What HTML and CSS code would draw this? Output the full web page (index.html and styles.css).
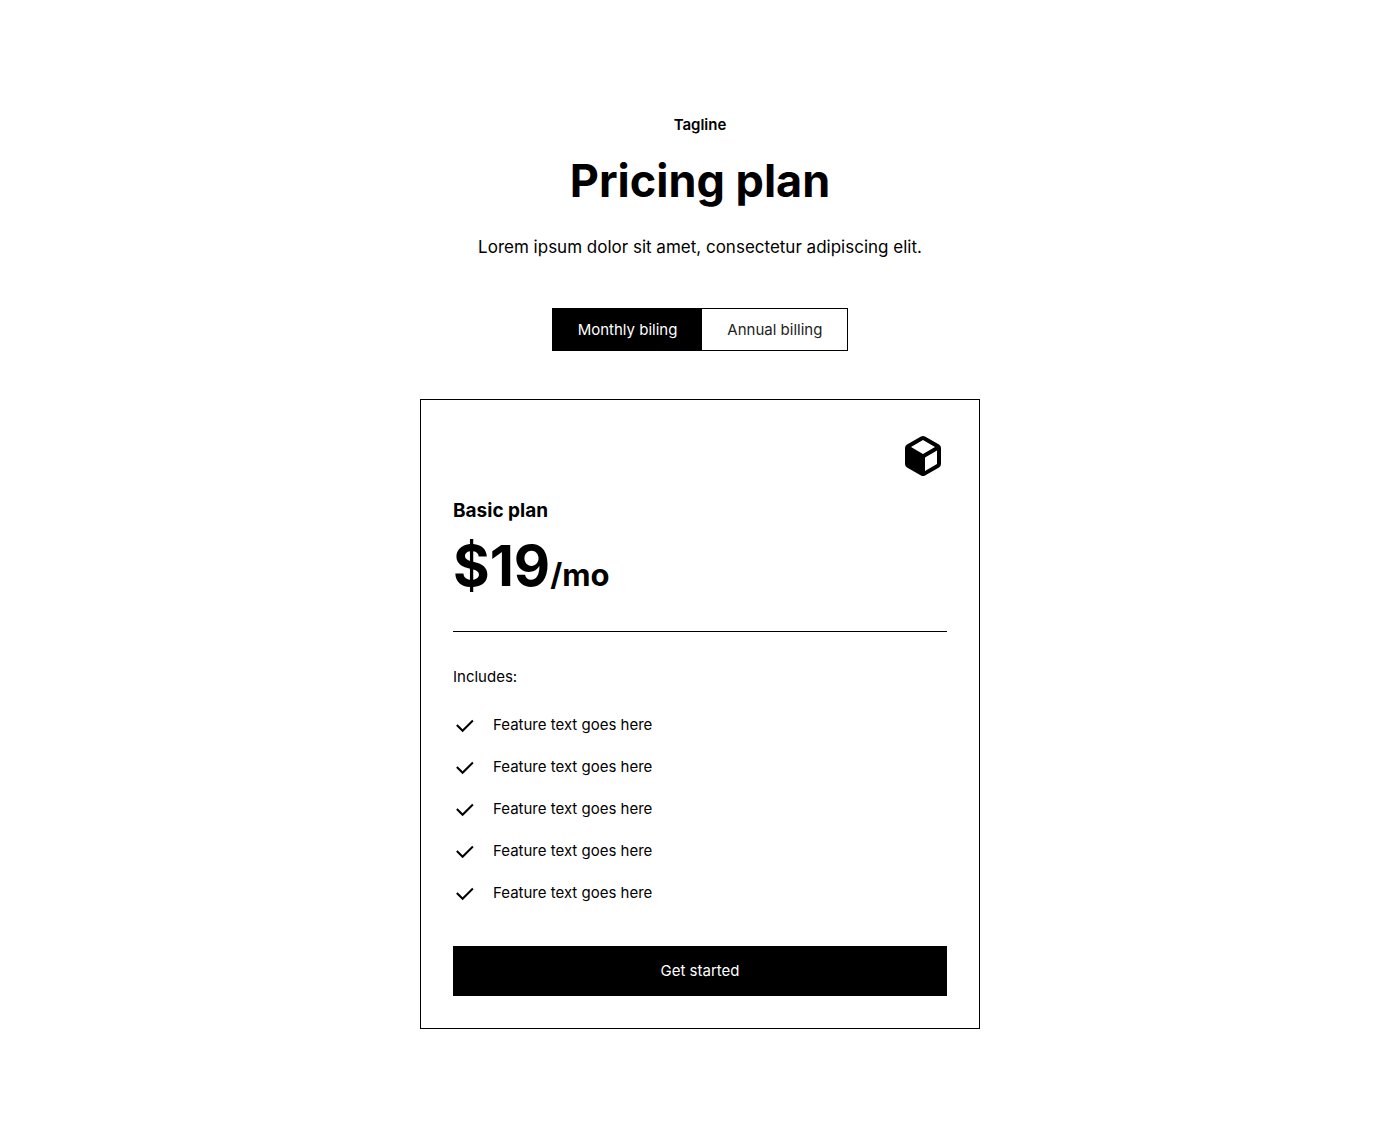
FILE: index.html
```html
<!DOCTYPE html>
<html lang="en">
<head>
  <meta charset="utf-8">
  <meta name="viewport" content="width=device-width, initial-scale=1">
  <title>Pricing plan</title>
  <link rel="stylesheet" href="styles.css">
</head>
<body>
  <svg class="sprite" aria-hidden="true">
    <symbol id="check" viewBox="0 0 24 24"><path fill="currentColor" d="m9.6 15.172 9.592-9.393 1.415 1.414L9.6 18.2l-6.464-6.464 1.414-1.414z"/></symbol>
  </svg>
  <main class="pricing">
    <header class="intro">
      <p class="tagline">Tagline</p>
      <h1 class="title">Pricing plan</h1>
      <p class="lead">Lorem ipsum dolor sit amet, consectetur adipiscing elit.</p>
    </header>
    <div class="billing" role="group" aria-label="Billing period">
      <button class="billing-option billing-option-active" type="button" aria-pressed="true">Monthly biling</button>
      <button class="billing-option" type="button" aria-pressed="false">Annual billing</button>
    </div>
    <section class="card">
      <svg class="card-icon" viewBox="0 0 24 24" aria-hidden="true"><path fill="currentColor" fill-rule="evenodd" d="M11 2.27a2 2 0 0 1 2 0l7 4a2 2 0 0 1 1 1.73v8a2 2 0 0 1-1 1.73l-7 4a2 2 0 0 1-2 0l-7-4A2 2 0 0 1 3 16V8a2 2 0 0 1 1-1.73zM12 4 6 7.5l6 3.5 6-3.5zM13 12.7v6.8l6-3.5V9.2z"/></svg>
      <h2 class="plan">Basic plan</h2>
      <p class="price">$19<span class="period">/mo</span></p>
      <div class="details">
        <p class="includes">Includes:</p>
        <ul class="features">
          <li class="feature"><svg class="check" aria-hidden="true"><use href="#check"/></svg>Feature text goes here</li>
          <li class="feature"><svg class="check" aria-hidden="true"><use href="#check"/></svg>Feature text goes here</li>
          <li class="feature"><svg class="check" aria-hidden="true"><use href="#check"/></svg>Feature text goes here</li>
          <li class="feature"><svg class="check" aria-hidden="true"><use href="#check"/></svg>Feature text goes here</li>
          <li class="feature"><svg class="check" aria-hidden="true"><use href="#check"/></svg>Feature text goes here</li>
        </ul>
      </div>
      <button class="cta" type="button">Get started</button>
    </section>
  </main>
</body>
</html>
```
FILE: styles.css
```css
* {
  box-sizing: border-box;
}

body,
h1,
h2,
p,
ul {
  margin: 0;
  padding: 0;
}

body {
  background: #fff;
  color: #000;
  font: 400 15px/26px Inter, "Liberation Sans", sans-serif;
}

button {
  font: inherit;
  cursor: pointer;
}

.sprite {
  display: none;
}

.pricing {
  display: flex;
  flex-direction: column;
  align-items: center;
  gap: 48px;
  padding: 112px 16px;
}

.intro {
  text-align: center;
}

.tagline {
  margin-bottom: 14px;
  font-weight: 600;
}

.title {
  margin-bottom: 24px;
  font-size: 45px;
  font-weight: 700;
  line-height: 58px;
}

.lead {
  font-size: 17px;
}

.billing {
  display: flex;
  border: 1px solid #000;
}

.billing-option {
  padding: 8px 25px;
  border: 0;
  background: #fff;
  color: #222;
  line-height: 25px;
}

.billing-option-active {
  background: #000;
  color: #fff;
}

.card {
  display: flex;
  flex-direction: column;
  width: 100%;
  max-width: 560px;
  padding: 32px;
  border: 1px solid #000;
}

.card-icon {
  align-self: flex-end;
  width: 48px;
  height: 48px;
  margin-bottom: 16px;
}

.plan {
  margin-bottom: 8px;
  font-size: 19px;
  font-weight: 700;
  line-height: 30px;
}

.price {
  margin-bottom: 32px;
  font-size: 56px;
  font-weight: 700;
  line-height: 65px;
}

.period {
  font-size: 31px;
  line-height: 32px;
}

.details {
  padding: 32px 0 40px;
  border-top: 1px solid #000;
}

.includes {
  margin-bottom: 22px;
}

.features {
  display: grid;
  gap: 16px;
  list-style: none;
}

.feature {
  display: flex;
  gap: 16px;
}

.check {
  flex: none;
  width: 24px;
  height: 24px;
  margin-top: 2px;
}

.cta {
  padding: 11px 24px;
  border: 1px solid #000;
  background: #000;
  color: #fff;
}
```
